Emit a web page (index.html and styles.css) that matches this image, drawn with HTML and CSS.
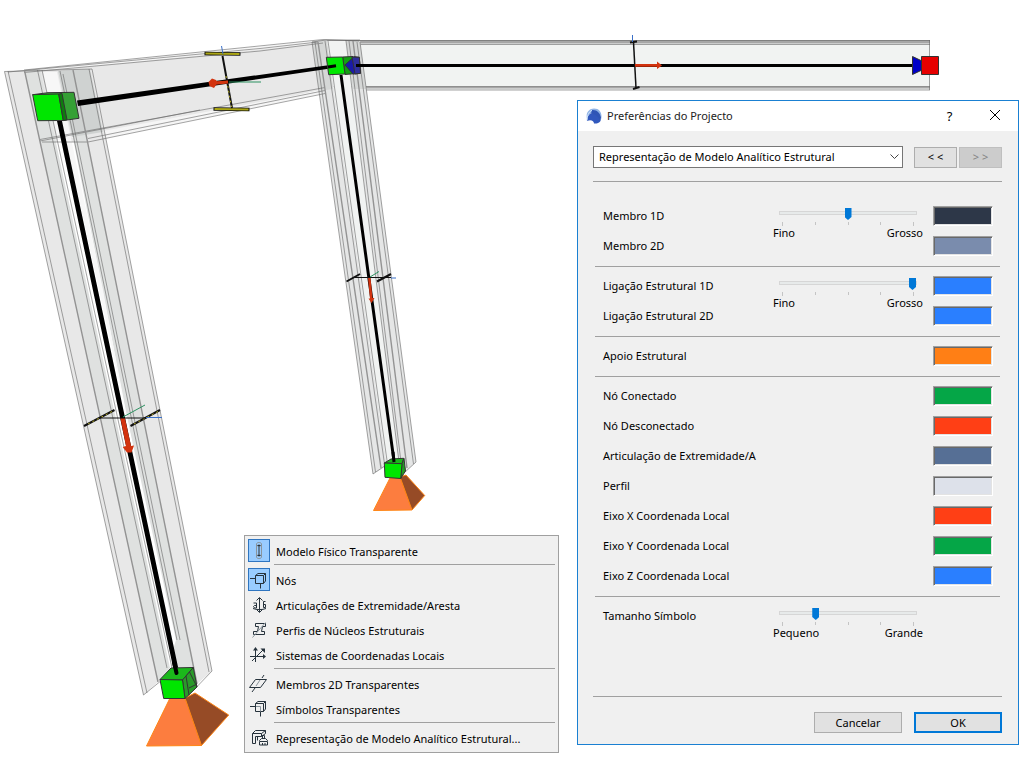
FILE: index.html
```
<!DOCTYPE html>
<html lang="pt">
<head>
<meta charset="utf-8">
<title>Preferências do Projecto</title>
<link rel="stylesheet" href="styles.css">
</head>
<body>
<main class="workspace">
<svg class="scene" viewBox="0 0 1024 758" aria-hidden="true">
  <!-- right beam -->
  <path fill="#f1f3f2" d="M318 41H930V90H325z"/>
  <path fill="#a6a6a6" d="M345 40H930V43.500H345zM350 86.500H930V88.500H350z"/>
  <g class="edge"><path d="M318 40.500H930M320 44.500H930M330 86.500H930M330 90H930M929.500 40V90"/></g>
  <!-- left beam -->
  <path fill="#e8e8e8" d="M24 72L317 42L325 89L88 142H40z"/>
  <path fill="#f6f6f6" d="M24 70L323 40V43L24 73zM88 142L325 93L325 90L70 137z"/>
  <!-- left column -->
  <path fill="#e8e8e8" d="M4.500 71.500L24.500 70.500L158 682L143.500 695zM73 70L92 69L212 671L197 684z"/>
  <path fill="#dfe1e0" d="M24.500 70.500L40 69L170 668L158 682zM60 71L73 70L197 684L180 690z"/>
  <path fill="#f7f7f7" d="M43 72L57 72L103 290L172 668z"/>
  <path fill="#fff" d="M57 140L66 140L176 640L170 660z"/>
  <path fill="#cfd2d1" d="M58 71L90 69L103 132L72 137z"/>
  <!-- middle column -->
  <path fill="#e5e6e6" d="M312 41L327 40L387 466L373 474zM346 41L360 41L416 462L407 470L399 466z"/>
  <path fill="#d5d7d6" d="M312 41L327 40L333 89L319 91zM346 41L360 41L366 89L353 89z"/>
  <path fill="#f1f3f2" d="M327 41L346 41L399 466L387 466z"/>
  <g class="edge">
    <path d="M24 70L323 39.500L359 41M24 72.500L260 51L323 43M8 72L260 48.500L318 42M40 139.500L325 87.500M42 142H88L325 93.500M88 138.500L325 90.500M40 141L200 110"/>
    <path d="M143.500 695L4.500 71.500L92 69L212 671L188 696M8 71L147 693M37.500 70L167 668M42 70L172 668M60 71L177 640M63 74L180 640M89 69L209 672M143.500 695L162 680"/>
    <path d="M312 42L373 474L386 465M315 42L375.500 472M325 41L384.500 464M328 41L387.500 464M346 41L399 462M349 41L401 462M357 42L413.500 464M360 42L416 462L404 473M312 42L326 40H360"/>
  </g>
  <g class="edge-strong"><path d="M24.500 70.500L158 682M73 70L197 684M318 42L381 468M353 41L407 468"/></g>
  <!-- supports -->
  <path fill="#fc7d3f" stroke="#ff8615" d="M170 698L185 698L201.500 745.500L146.500 746zM390 478L400 477L412 510L373.500 510.500z"/>
  <path fill="#964b26" stroke="#ff8615" d="M185 698L195 693L228.700 715L201.500 745.500zM400 477L406 475L424.700 495.500L412 510z"/>
  <!-- member axes -->
  <path d="M57 121H62L179.500 674H174.500zM77 100.500L337 64V67.500L78 106zM339.500 75H342.500L395.500 461H392.500zM355 64H914V67H355z"/>
  <!-- top left node -->
  <g class="node">
    <path fill="#35a035" d="M32.700 94.700L48 92.700L74 92.300L79 118.300L63.300 120.500z"/>
    <path fill="#00e600" d="M32.700 94.700L58.700 94L63.300 120.500L37.700 120.700z"/>
    <path fill="#0d7d0d" d="M58.700 94L62 93.500L67 119.800L63.300 120.500z"/>
  </g>
  <!-- middle node -->
  <g class="node">
    <path fill="#12a012" d="M342.700 57L353 56.500L356 73.500L345 74.500z"/>
    <path fill="#00e600" d="M326.300 57.300L342.700 57L345 74L328.700 74.700z"/>
    <path fill="#1a1aaa" d="M345 65L354 56.700L359.300 57.300L360.500 73.300L353 74z"/>
    <path fill="#2f2f9d" d="M352 57L359.300 57.300L360.500 73.300L355 74z"/>
  </g>
  <path stroke="#000" stroke-width="3" d="M328 67L336 65.800M356 65.500H362"/>
  <!-- right node -->
  <g class="node">
    <path fill="#0000c8" d="M912.500 56.500L922 61V70L912.500 74.500z"/>
    <path fill="#e60000" d="M921.500 56.500H938.500V74.500H921.500z"/>
  </g>
  <!-- lower nodes -->
  <g class="node">
    <path fill="#1bb81b" d="M160 679.500L171 668L193.300 667.500L182.500 680z"/>
    <path fill="#2a9a2a" d="M182.500 680L193.300 667.500L197 687L185 698.500z"/>
    <path fill="#00e600" d="M160 679.500L182.500 680L185 698.500L163.700 698.500z"/>
    <path fill="none" d="M186 676L189 695M189.500 672L197 687M197 684L189 688"/>
    <path fill="#1bb81b" d="M384.300 463L391 459L403.700 458.300L402 463.700z"/>
    <path fill="#239a23" d="M402 463.700L404 458.500L405.500 471L400.700 478.500z"/>
    <path fill="#00e600" d="M384.300 463L402 463.700L400.700 478.500L385 477.300z"/>
  </g>
  <path stroke="#000" stroke-width="4" stroke-linecap="round" d="M174 662L176.500 673"/>
  <path stroke="#000" stroke-width="3" d="M393 452L394 462"/>
  <!-- section profiles -->
  <path stroke="#111" stroke-width="3.600" d="M204.500 53.500L240.500 54M213.500 109L249.500 109.500"/>
  <path stroke="#aaa514" stroke-width="2" d="M205.500 53.500L239.500 54M214.500 109L248.500 109.500"/>
  <path stroke="#111" stroke-width="2" d="M222.500 56L232 108M84 426L114.500 410M130.500 426L160 410M346.500 281.500L360 274M377 281.500L391 274"/>
  <path stroke="#111" stroke-width="1.500" d="M633.500 42L636 88"/>
  <path stroke="#b5ad2a" stroke-dasharray="2 3" d="M226 76L231.500 107M88 424L112 411.500M134 424L158 411.500"/>
  <path stroke="#111" stroke-width="2" d="M630 42.500L637 41.500M633 89L639.500 87"/>
  <path stroke="#111" d="M100 418H146M355 277.500H391"/>
  <path stroke="#3a70c8" d="M221.500 46L223 54M146 417.500H162M391 278H396M632.500 35V42"/>
  <path stroke="#2b9160" d="M229 82H261M123 417L145 405M370 277L379 271.500"/>
  <!-- local x axes -->
  <g fill="#d2330f">
    <path d="M213 81.500L228 80.500V83.500L213 85zM208.500 82L212 78.500L216 80L217.500 83L214 88L209.500 86z"/>
    <path d="M120.500 418.500H125L131 446L134 445.500L131.500 452.500H127L122.700 447L126 446zM368 278H370.500L372.500 298H374.500L371.500 303L368.500 298.500H370z"/>
    <path d="M635 64H657V61.500L662 65.500L657 69V66.800H635z"/>
  </g>
</svg>

<div class="menu" role="menu" aria-label="Modelo analítico">
  <button class="item" role="menuitemcheckbox" aria-checked="true"><span class="icon"><svg viewBox="0 0 22 23"><path class="soft" d="M8.500 5v13c0 2 5 2 5 0V5c0-2-5-2-5 0zM8.500 6c1 1.500 4 1.500 5 0M8.500 17c1-1.500 4-1.500 5 0"/><path d="M11 5.500v12M9.500 6.500h3M9.500 16.500h3"/></svg></span>Modelo Físico Transparente</button>
  <hr>
  <button class="item" role="menuitemcheckbox" aria-checked="true"><span class="icon"><svg viewBox="0 0 22 23"><path d="M7.500 7.500h8v8h-8zM7.500 7.500l2.500-2h7.500v7.500l-2 2.500M15.500 7.500l2-2M2 10.500h5.500M12.500 15.500v5"/></svg></span>Nós</button>
  <button class="item" role="menuitemcheckbox" aria-checked="false"><span class="icon"><svg viewBox="0 0 22 23"><path d="M11.500 5v14M8.500 7.500l3-3 3 3M8.500 16.500l3 3 3-3M5.500 10h3v5h-2l-1-1.500 1-1h2M17.500 8.500h-2v6h2v-3h-2M5 15.500c4 1.500 9 1.500 13 0"/></svg></span>Articulações de Extremidade/Aresta</button>
  <button class="item" role="menuitemcheckbox" aria-checked="false"><span class="icon"><svg viewBox="0 0 22 23"><path d="M7.500 5.500h10v3h-3l-1 5h3v3h-11v-3h4l1-5h-3z"/><path class="soft" d="M4.500 19.500L17.500 4.500"/></svg></span>Perfis de Núcleos Estruturais</button>
  <button class="item" role="menuitemcheckbox" aria-checked="false"><span class="icon"><svg viewBox="0 0 22 23"><path d="M7.500 19V5M2 13.500h15M4 18L16 6"/><path class="solid" d="M5 7.500L7.500 4L10 7.500zM15 11l3 2.500-3 2.500zM12.500 5.500h4.500V10z"/></svg></span>Sistemas de Coordenadas Locais</button>
  <hr>
  <button class="item" role="menuitemcheckbox" aria-checked="false"><span class="icon"><svg viewBox="0 0 22 23"><path d="M7.500 7.500h11l-6 8h-11zM14 6l2-3M4 20l3-4"/><path class="soft" d="M8 14l4-6"/></svg></span>Membros 2D Transparentes</button>
  <button class="item" role="menuitemcheckbox" aria-checked="false"><span class="icon"><svg viewBox="0 0 22 23"><path d="M7.500 6.500h8v8h-8zM7.500 6.500l2.500-2h7.500v7.500l-2 2.500M15.500 6.500l2-2M2 9.500h5.500M12.500 14.500v5"/><path class="soft" d="M8 9.500h4.500v5"/></svg></span>Símbolos Transparentes</button>
  <hr>
  <button class="item" role="menuitem"><span class="icon"><svg viewBox="0 0 22 23"><path d="M4.500 7.500h9v3h-6v7h-3zM4.500 7.500l3-3h10l-4 3M13.500 10.500l4-3V4.500M9.500 10.500v4M14.500 9.500h2v3h-2zM11.500 14.500l2-2h4l2 2v1h-8zM11.500 16v3h8v-3M14.500 17v2M17 17v2"/></svg></span>Representação de Modelo Analítico Estrutural...</button>
</div>

<form class="dialog" role="dialog" aria-labelledby="title">
  <header class="titlebar">
    <svg class="logo" viewBox="0 0 16 16" aria-hidden="true"><path fill="#8fb3e6" d="M8 .5C13 .5 15.500 4 15.500 8.500C15.500 10 15 12 14.500 13C13 9 11 6 7 5C4 5 2 7 1 10.500C-.5 5 3 .5 8 .5z"/><path fill="#3158bd" d="M1 13C1 8 4 4.500 7.500 5C11 6 14 9.500 14.500 13C13 15 10.500 15.800 8 15.500C8 13 5 11 1 13z"/><path fill="#2f55b5" d="M6 2C11 1.500 14 5 15 9.500C14.500 11 14.500 12 14 13C12 8 9 6 5 5.500z"/><path fill="none" stroke="#cfe2fa" d="M1 12.500C1 8 2.500 4 6 2"/></svg>
    <h1 id="title">Preferências do Projecto</h1>
    <button type="button" class="caption help" aria-label="Ajuda">?</button>
    <button type="button" class="caption" aria-label="Fechar"><svg class="cross" viewBox="0 0 12 12"><path d="M1 1l10 10M11 1L1 11"/></svg></button>
  </header>
  <div class="content">
    <div class="pager">
      <div class="picker">
        <select aria-label="Página"><option>Representação de Modelo Analítico Estrutural</option></select>
        <svg class="chevron" viewBox="0 0 9 6" aria-hidden="true"><path d="M.5.500l4 4 4-4"/></svg>
      </div>
      <button type="button" class="btn step">&lt; &lt;</button>
      <button type="button" class="btn step" disabled>&gt; &gt;</button>
    </div>

    <section class="group">
      <label for="c1">Membro 1D</label><button type="button" id="c1" class="swatch navy"></button>
      <label for="c2">Membro 2D</label><button type="button" id="c2" class="swatch steel"></button>
      <div class="slider"><input type="range" aria-label="Espessura de membro" min="0" max="4" value="2"><div class="ticks"><i></i><i></i><i></i><i></i><i></i></div><div class="ends"><span>Fino</span><span>Grosso</span></div></div>
    </section>
    <section class="group">
      <label for="c3">Ligação Estrutural 1D</label><button type="button" id="c3" class="swatch blue"></button>
      <label for="c4">Ligação Estrutural 2D</label><button type="button" id="c4" class="swatch blue"></button>
      <div class="slider"><input type="range" aria-label="Espessura de ligação" min="0" max="4" value="4"><div class="ticks"><i></i><i></i><i></i><i></i><i></i></div><div class="ends"><span>Fino</span><span>Grosso</span></div></div>
    </section>
    <section class="group">
      <label for="c5">Apoio Estrutural</label><button type="button" id="c5" class="swatch orange"></button>
    </section>
    <section class="group">
      <label for="c6">Nó Conectado</label><button type="button" id="c6" class="swatch green"></button>
      <label for="c7">Nó Desconectado</label><button type="button" id="c7" class="swatch red"></button>
      <label for="c8">Articulação de Extremidade/A</label><button type="button" id="c8" class="swatch slate"></button>
      <label for="c9">Perfil</label><button type="button" id="c9" class="swatch pale"></button>
      <label for="c10">Eixo X Coordenada Local</label><button type="button" id="c10" class="swatch red"></button>
      <label for="c11">Eixo Y Coordenada Local</label><button type="button" id="c11" class="swatch green"></button>
      <label for="c12">Eixo Z Coordenada Local</label><button type="button" id="c12" class="swatch blue"></button>
    </section>
    <section class="group last">
      <label for="size">Tamanho Símbolo</label>
      <div class="slider"><input id="size" type="range" min="0" max="4" value="1"><div class="ticks"><i></i><i></i><i></i><i></i><i></i></div><div class="ends"><span>Pequeno</span><span>Grande</span></div></div>
    </section>

    <footer class="actions">
      <button type="button" class="btn">Cancelar</button>
      <button type="submit" class="btn primary">OK</button>
    </footer>
  </div>
</form>
</main>
</body>
</html>
```
FILE: styles.css
```
* { box-sizing: border-box; }
body {
  margin: 0;
  background: #fff;
  color: #000;
  font: 11px/14px "Noto Sans", "Open Sans", sans-serif;
}
button, select, input { font: inherit; color: inherit; margin: 0; }

.workspace { position: relative; min-height: 100vh; }
.scene { display: block; width: 100%; height: auto; fill: #000; }
.edge { fill: none; stroke: #666; stroke-opacity: .75; stroke-width: .8; }
.edge-strong { fill: none; stroke: #939393; stroke-width: 1.400; }
.node { stroke: #333; stroke-width: 1; }

/* context menu */
.menu {
  position: absolute;
  left: 244px;
  top: 535px;
  width: 315px;
  padding: 3px 3px 1px;
  background: #f0f0f0;
  border: 1px solid #a0a0a0;
}
.menu hr {
  height: 4px;
  margin: 0 0 0 26px;
  border: 0;
  border-top: 1px solid #a0a0a0;
}
.item {
  display: flex;
  align-items: center;
  gap: 6px;
  width: 100%;
  height: 25px;
  padding: 0;
  border: 0;
  background: none;
  text-align: left;
  white-space: nowrap;
}
.icon {
  flex: none;
  align-self: flex-start;
  width: 22px;
  height: 23px;
  border: 1px solid transparent;
}
.item[aria-checked="true"] .icon { background: #99ccff; border-color: #2f75c0; }
.icon svg { display: block; margin: -1px; width: 22px; height: 23px; fill: none; stroke: #26323c; }
.icon .soft { stroke: #8a959d; }
.icon .solid { fill: #26323c; stroke: none; }

/* dialog */
.dialog {
  position: absolute;
  left: 577px;
  top: 100px;
  width: 442px;
  background: #f0f0f0;
  border: 1px solid #1a80d2;
}
.titlebar {
  display: flex;
  align-items: center;
  height: 30px;
  padding-left: 8px;
  background: #fff;
}
.logo { width: 16px; height: 16px; margin-right: 5px; }
.titlebar h1 { flex: 1; margin: 0; font-size: 11px; font-weight: 400; color: #222; }
.caption { width: 45px; height: 28px; padding: 0; border: 0; background: none; }
.caption:last-child { margin-right: 1px; }
.help { font-size: 13px; }
.cross { width: 12px; height: 12px; fill: none; stroke: #000; }
.content { padding: 15px 16px 11px 15px; }
.pager {
  display: flex;
  align-items: center;
  gap: 2px;
  padding-bottom: 13px;
  margin-bottom: 15px;
  border-bottom: 1px solid #a0a0a0;
}
.picker { flex: 1; display: grid; align-items: center; margin-right: 9px; }
.picker select {
  grid-area: 1 / 1;
  width: 100%;
  height: 22px;
  padding: 0 20px 0 5px;
  appearance: none;
  background: #fff;
  border: 1px solid #767676;
  border-radius: 0;
}
.chevron {
  grid-area: 1 / 1;
  justify-self: end;
  width: 9px;
  height: 6px;
  margin-right: 4px;
  fill: none;
  stroke: #444;
  pointer-events: none;
}
.btn {
  width: 88px;
  height: 21px;
  padding: 0;
  background: #e1e1e1;
  border: 1px solid #adadad;
}
.step { width: 43px; }
.btn:disabled { background: #ccc; border-color: #bfbfbf; color: #838383; }
.primary { border: 2px solid #0078d7; }

.group {
  display: grid;
  grid-template-columns: 1fr 150px 60px;
  grid-auto-rows: 30px;
  column-gap: 10px;
  align-items: center;
  margin: 0 2px;
  padding: 4px 7px 5px 8px;
  border-bottom: 1px solid #a0a0a0;
}
.group.last { grid-template-rows: 95px; align-items: start; padding-bottom: 0; border: 0; }
.group label { grid-column: 1; }
.last label { line-height: 30px; }
.slider { grid-column: 2; grid-row: 1 / span 2; align-self: start; padding-top: 6px; }
.last .slider { grid-row: 1; }
.slider input {
  display: block;
  width: 138px;
  height: 12px;
  margin: 0 6px 3px;
  appearance: none;
  background: none;
}
.slider input::-webkit-slider-runnable-track {
  height: 4px;
  background: #e7eaea;
  border: 1px solid #d6d6d6;
}
.slider input::-webkit-slider-thumb {
  appearance: none;
  width: 7px;
  height: 12px;
  margin-top: -4px;
  background: #0078d7;
  clip-path: polygon(0 0, 100% 0, 100% 75%, 50% 100%, 0 75%);
}
.ticks { display: flex; justify-content: space-between; height: 4px; padding: 0 9px; }
.ticks i { width: 1px; height: 3px; background: #c4c4c4; }
.ticks i:first-child, .ticks i:last-child { height: 4px; }
.ends { display: flex; justify-content: space-between; }
.swatch {
  grid-column: 3;
  width: 60px;
  height: 20px;
  padding: 0;
  border: 1px solid;
  border-color: #a0a0a0 #fff #fff #a0a0a0;
  box-shadow: inset 1px 1px #696969, inset -1px -1px #e3e3e3;
}
.navy { background: #2d3748; }
.steel { background: #7a8cad; }
.blue { background: #2a7fff; }
.orange { background: #ff7f15; }
.green { background: #05a647; }
.red { background: #ff3f15; }
.slate { background: #566f95; }
.pale { background: #dde1ea; }

.actions {
  display: flex;
  justify-content: flex-end;
  gap: 12px;
  padding-top: 15px;
  border-top: 1px solid #a0a0a0;
}
```
